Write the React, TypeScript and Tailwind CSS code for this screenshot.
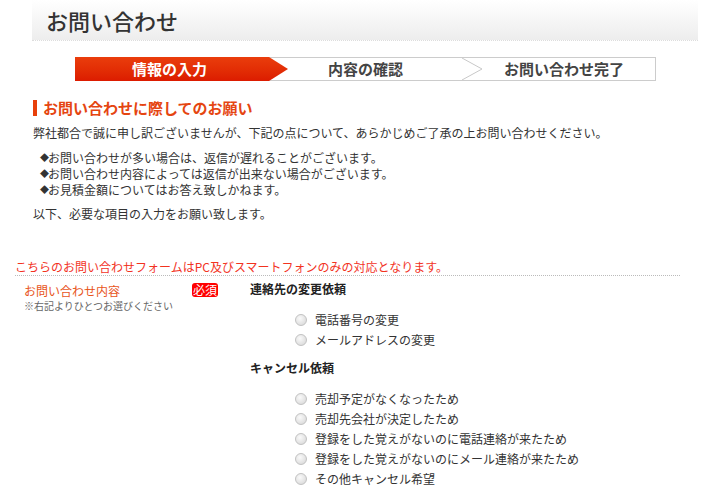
const font = "font-['Noto_Sans_CJK_JP','Noto_Sans_CJK_SC',sans-serif]";

const contactChange = ["電話番号の変更", "メールアドレスの変更"];
const cancelReasons = [
    "売却予定がなくなったため",
    "売却先会社が決定したため",
    "登録をした覚えがないのに電話連絡が来たため",
    "登録をした覚えがないのにメール連絡が来たため",
    "その他キャンセル希望",
];
const notes = [
    "お問い合わせが多い場合は、返信が遅れることがございます。",
    "お問い合わせ内容によっては返信が出来ない場合がございます。",
    "お見積金額についてはお答え致しかねます。",
];

function Radio({ label }: { label: string }) {
    return (
        <label className="flex h-[20px] items-center">
            <span className="h-[12px] w-[12px] rounded-full border border-[#c2c2c2] bg-[radial-gradient(circle_at_40%_35%,#fafafa,#d4d4d4)]" />
            <span className="ml-[8px] text-[12px] leading-[16px] text-[#333]">{label}</span>
        </label>
    );
}

function StepBar() {
    return (
        <div className="ml-[75px] mt-[16px] flex h-[24px] w-[581px] border border-[#cccccc]">
            <div className="relative z-10 -my-px -ml-px flex h-[24px] w-[213px] shrink-0 items-center bg-linear-to-b from-[#ea3d0c] to-[#dc1b00] pl-[57px] [clip-path:polygon(0_0,194px_0,100%_50%,194px_100%,0_100%)]">
                <span className="text-[15px] font-bold leading-[18px] text-white">情報の入力</span>
            </div>
            <div className="-ml-[19px] flex w-[193px] shrink-0 items-center justify-center">
                <span className="text-[15px] font-bold leading-[18px] text-[#444]">内容の確認</span>
            </div>
            <svg width="20" height="22" viewBox="0 0 20 22" className="shrink-0">
                <polyline points="0,0 20,11 0,22" fill="none" stroke="#c8c8c8" strokeWidth="1" />
            </svg>
            <div className="flex flex-1 items-center pl-[22px]">
                <span className="text-[15px] font-bold leading-[18px] text-[#444]">お問い合わせ完了</span>
            </div>
        </div>
    );
}

export default function App() {
    return (
        <div className={`${font} h-[496px] w-[703px] overflow-hidden bg-white`}>
            <div className="ml-[32px] mr-[5px] flex h-[41px] items-center border-b border-dotted border-[#dddddd] bg-linear-to-b from-white to-[#ededed] pl-[14px]">
                <h1 className="text-[22px] font-medium leading-[26px] text-[#333]">お問い合わせ</h1>
            </div>

            <StepBar />

            <div className="ml-[33px] mt-[19px]">
                <h2 className="border-l-4 border-[#e8400a] pl-[6px] text-[15px] font-bold leading-[16px] text-[#e54511]">
                    お問い合わせに際してのお願い
                </h2>
                <p className="mt-[9px] text-[12px] leading-[16px] text-[#333]">
                    弊社都合で誠に申し訳ございませんが、下記の点について、あらかじめご了承の上お問い合わせください。
                </p>
                <ul className="ml-[7px] mt-[9px] text-[12px] leading-[16px] text-[#333]">
                    {notes.map((n) => (
                        <li key={n} className="flex items-center">
                            <span className="w-[8px] text-[9px] leading-[16px]">◆</span>
                            <span>{n}</span>
                        </li>
                    ))}
                </ul>
                <p className="mt-[8px] text-[12px] leading-[16px] text-[#333]">以下、必要な項目の入力をお願い致します。</p>
            </div>

            <div className="ml-[15px] mt-[37px] w-[665px] border-b border-dotted border-[#bbbbbb] text-[12px] leading-[16px] text-[#f2331f]">
                こちらのお問い合わせフォームはPC及びスマートフォンのみの対応となります。
            </div>

            <div className="ml-[15px] flex items-start">
                <div className="w-[235px] shrink-0 pl-[9px] pt-[7px]">
                    <div className="flex items-start">
                        <div className="w-[168px]">
                            <div className="text-[12px] leading-[16px] text-[#e8541a]">お問い合わせ内容</div>
                            <div className="mt-px text-[10px] leading-[12px] text-[#666]">※右記よりひとつお選びください</div>
                        </div>
                        <span className="rounded-[3px] bg-[#ff0000] px-[1px] text-[12px] leading-[14px] text-white">必須</span>
                    </div>
                </div>
                <div className="pt-[5px]">
                    <div className="text-[12px] font-bold leading-[16px] text-[#222]">連絡先の変更依頼</div>
                    <div className="ml-[45px] mt-[13px]">
                        {contactChange.map((c) => (
                            <Radio key={c} label={c} />
                        ))}
                    </div>
                    <div className="mt-[10px] text-[12px] font-bold leading-[16px] text-[#222]">キャンセル依頼</div>
                    <div className="ml-[45px] mt-[13px]">
                        {cancelReasons.map((c) => (
                            <Radio key={c} label={c} />
                        ))}
                    </div>
                </div>
            </div>
        </div>
    );
}
